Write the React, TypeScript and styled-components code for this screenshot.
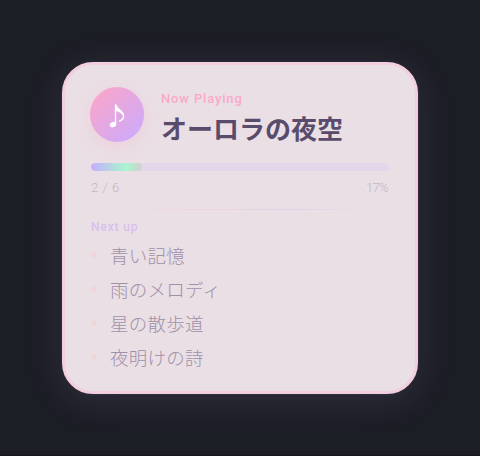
import React from 'react';
import styled, { createGlobalStyle } from 'styled-components';

const GlobalStyle = createGlobalStyle`
  * { box-sizing: border-box; }
  body { margin: 0; background: #1c1e26; font-family: Roboto, 'Noto Sans CJK JP', sans-serif; }
`;

const Page = styled.main`
  height: 456px;
  display: flex;
  justify-content: center;
  align-items: flex-start;
  padding-top: 62px;
  overflow: hidden;
  border-bottom: 1px solid #16151e;
`;

const Card = styled.section`
  width: 356px;
  height: 332px;
  padding: 22px 26px 0 25px;
  display: flex;
  flex-direction: column;
  border: 3px solid #f3cede;
  border-radius: 31px;
  background: #eadfe5;
  box-shadow: 0 6px 36px rgba(200, 170, 225, 0.12), 0 0 3px rgba(200, 170, 225, 0.1);
`;

const Header = styled.header`
  display: flex;
  gap: 17px;
  height: 54px;
`;

const Disc = styled.div`
  flex: none;
  width: 54.5px;
  height: 54.5px;
  margin-left: -0.5px;
  border-radius: 50%;
  background: linear-gradient(135deg, #ffa5c6, #c8aaff);
  box-shadow: 0 5px 18px rgba(255, 165, 198, 0.26);
`;

const NoteIcon = styled.svg`
  display: block;
  width: 54px;
  height: 54px;
`;

const Heading = styled.div`
  padding-top: 5px;
  white-space: nowrap;
`;

const Label = styled.div<{ $tone: string; $size: number }>`
  color: ${({ $tone }) => $tone};
  font-size: ${({ $size }) => $size}px;
  font-weight: 500;
  line-height: 14px;
  letter-spacing: 0.85px;
`;

const Title = styled.h1`
  margin: 5px 0 0;
  color: #594b6b;
  font: 700 26px/34px 'Noto Sans CJK JP', sans-serif;
`;

const ProgressTrack = styled.div`
  height: 8px;
  margin: 22px 0 0 1px;
  border-radius: 4px;
  background: #e4d7ea;
  overflow: hidden;
`;

const Fill = styled.div`
  width: 51px;
  height: 100%;
  border-radius: 4px;
  background: linear-gradient(90deg, #c5adff, #a9f5d0 67%, #cbd6cc 96%);
`;

const Counts = styled.div`
  display: flex;
  justify-content: space-between;
  margin: 8px 0 0 1px;
  color: #c0b7be;
  font-size: 13px;
  font-weight: 300;
  line-height: 17px;
`;

const Position = styled.span`
  letter-spacing: 0.6px;
`;

const Percent = styled.span`
  margin-right: 1px;
  letter-spacing: -0.7px;
`;

const Divider = styled.div`
  height: 1px;
  margin: 13px 0 10px 1px;
  background: linear-gradient(90deg, transparent 6%, #efd4df 33%, #e1d1e9 68%, transparent 94%);
`;

const Queue = styled.section`
  padding-left: 1px;
`;

const List = styled.ul`
  list-style: none;
  margin: 4px 0 0;
  padding: 0;
`;

const Song = styled.li`
  display: flex;
  align-items: center;
  gap: 13px;
  height: 34px;
  color: #a091a8;
  font: 300 18.5px/34px 'Noto Sans CJK JP', sans-serif;
  letter-spacing: 0.25px;
`;

const Dot = styled.span`
  flex: none;
  width: 6px;
  height: 6px;
  border-radius: 50%;
  background: #f1d6d9;
`;

const songs = ['青い記憶', '雨のメロディ', '星の散歩道', '夜明けの詩'];

export default function App() {
  return (
    <>
      <GlobalStyle />
      <Page>
        <Card>
          <Header>
            <Disc>
              <NoteIcon viewBox="0 0 54 54" fill="none">
                <ellipse cx="23" cy="37.6" rx="3.3" ry="2.6" transform="rotate(-20 23 37.6)" fill="#fff" />
                <path d="M25.5 37.5V17.5C26.5 22.5 33.6 23.8 33.6 29.2C33.6 31.5 31.5 33.3 29.2 34.3" stroke="#fff" strokeWidth="1.4" />
                <path d="M25 17.3C26 21.5 33 23.6 34 28.8C31 25.8 27.5 24.2 25 23.4Z" fill="#fff" />
              </NoteIcon>
            </Disc>
            <Heading>
              <Label $tone="#faaac8" $size={13}>Now Playing</Label>
              <Title>オーロラの夜空</Title>
            </Heading>
          </Header>
          <ProgressTrack><Fill /></ProgressTrack>
          <Counts><Position>2 / 6</Position><Percent>17%</Percent></Counts>
          <Divider />
          <Queue>
            <Label $tone="#d7bfef" $size={12}>Next up</Label>
            <List>
              {songs.map((song) => (
                <Song key={song}><Dot />{song}</Song>
              ))}
            </List>
          </Queue>
        </Card>
      </Page>
    </>
  );
}
